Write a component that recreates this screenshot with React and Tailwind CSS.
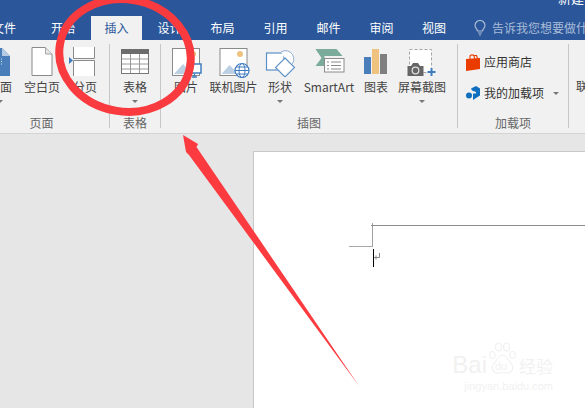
const cjk = { fontFamily: '"Noto Sans CJK SC", sans-serif' };

function Tab({ label, className }) {
  return <div className={`shrink-0 flex items-center justify-center text-white ${className}`}>{label}</div>;
}

function RibbonButton({ label, width, icon, caret }) {
  return (
    <div className={`flex flex-col items-center shrink-0 ${width}`}>
      <div className="h-[33px] flex items-end justify-center">{icon}</div>
      <div className="mt-[1px] h-[20px] leading-[20px] whitespace-nowrap">{label}</div>
      {caret && <div className="mt-[3px] w-0 h-0 border-x-[3px] border-x-transparent border-t-[3px] border-t-[#777]" />}
    </div>
  );
}

function Group({ width, label, children, last }) {
  return (
    <div className={`shrink-0 h-full flex ${width}`}>
      <div className="flex-1 min-w-0 flex flex-col">
        <div className="flex-1 flex pt-[3px]">{children}</div>
        <div className="h-[20px] text-center text-[#666] leading-[20px] whitespace-nowrap">{label}</div>
      </div>
      {!last && <div className="w-px mt-[4px] mb-[5px] bg-[#c6c6c6]" />}
    </div>
  );
}

const Doc = () => (
  <svg width="20" height="28" viewBox="0 0 20 28"><path d="M0 0h12l8 8v20H0z" fill="#4a7ebb"/><path d="M12 0l8 8h-8z" fill="#b5cbe4"/><path d="M3 11h9M3 13.500h9M3 16h9" stroke="#dbe6f2" strokeDasharray="1 1"/></svg>
);
const Blank = () => (
  <svg width="22" height="29" viewBox="0 0 22 29"><path d="M1 .5h13.500L21 7v21.500H1z" fill="#fff" stroke="#8a8a8a"/><path d="M14.500 .5V7H21" fill="#e6e6e6" stroke="#a5a5a5"/></svg>
);
const Break = () => (
  <svg width="32" height="29" viewBox="0 0 32 29"><path d="M4.500 0v11.500h21V0M4.500 29V13.500h21V29" fill="#fff" stroke="#8a8a8a"/><path d="M0 10l4 3.500L0 17z" fill="#3f7cbf"/></svg>
);
const TableIcon = () => (
  <svg width="28" height="25" viewBox="0 0 28 25" className="mb-[2px]">
    <rect x=".5" y=".5" width="27" height="24" fill="#fff" stroke="#777"/>
    <rect x="0" y="0" width="28" height="5" fill="#6d6d6d"/>
    <path d="M1 10h26M1 15h26M1 20h26M9.500 5v19M18.500 5v19" stroke="#9a9a9a"/>
  </svg>
);
const Picture = () => (
  <svg width="32" height="30" viewBox="0 0 32 30" className="-mb-[2px]">
    <rect x="2.500" y=".5" width="27" height="27" fill="#fff" stroke="#8a8a8a"/>
    <path d="M4 26l9-10 5 5 3-2 5 7z" fill="#bcd0e4"/>
    <circle cx="23" cy="6" r="3" fill="#efc27f"/>
    <rect x="17.500" y="16" width="13.500" height="9" fill="#fff" stroke="#3f7cbf" strokeWidth="1.500"/>
    <path d="M22 29h5M24.500 26v3" stroke="#3f7cbf" strokeWidth="1.300"/>
  </svg>
);
const Online = () => (
  <svg width="32" height="30" viewBox="0 0 32 30" className="-mb-[2px]">
    <rect x="2" y=".5" width="27" height="27" fill="#fff" stroke="#8a8a8a"/>
    <path d="M3.500 26l8-9 5 5 3-2 5 6z" fill="#bcd0e4"/>
    <circle cx="22" cy="6" r="3" fill="#efc27f"/>
    <circle cx="24" cy="22.500" r="7" fill="#fff" stroke="#3f7cbf" strokeWidth="1.200"/>
    <ellipse cx="24" cy="22.500" rx="3" ry="7" fill="none" stroke="#3f7cbf"/>
    <path d="M17 22.500h14M18 19h12M18 26h12" stroke="#3f7cbf"/>
  </svg>
);
const Shapes = () => (
  <svg width="32" height="30" viewBox="0 0 32 30" className="-mb-[1px]">
    <rect x="2.500" y="6" width="17.500" height="17" fill="#fff" stroke="#5b8fc7" strokeWidth="1.200"/>
    <path d="M17 5a8 8 0 1 1 9 14" fill="#fff" stroke="#8fb0d3"/>
    <path d="M21 11l9.500 9.500L21 30l-9.500-9.500z" fill="#fff" stroke="#5b8fc7" strokeWidth="1.100"/>
  </svg>
);
const SmartArt = () => (
  <svg width="32" height="24" viewBox="0 0 32 24" className="mb-[3px]">
    <path d="M2.500 0h21l6 7H11.500v10h-9l6-8z" fill="#7bab9a"/>
    <rect x="11.500" y="9.500" width="19.500" height="13.500" fill="#fff" stroke="#8a8a8a"/>
    <path d="M14 13h2M18 13h10M14 16.500h2M18 16.500h10M14 20h2M18 20h10" stroke="#8a8a8a"/>
  </svg>
);
const Chart = () => (
  <svg width="24" height="25" viewBox="0 0 24 25" className="mb-[2px]">
    <rect x="0" y="8" width="7" height="17" fill="#4a7ebb"/>
    <rect x="8" y="0" width="7" height="25" fill="#efc27f"/>
    <rect x="16" y="5" width="7" height="20" fill="#7f7f7f"/>
  </svg>
);
const Screenshot = () => (
  <svg width="30" height="28" viewBox="0 0 30 28">
    <rect x="2.500" y="1.500" width="22" height="23" fill="#fff" stroke="#a5a5a5" strokeDasharray="3 2"/>
    <path d="M.5 18h3.500l2-3h5l2 3h3.500v10H.5z" fill="#666"/>
    <circle cx="8.500" cy="22.500" r="3.300" fill="#666" stroke="#ddd" strokeWidth="1.300"/>
    <path d="M24.500 20v8M20.500 24h8" stroke="#3f7cbf" strokeWidth="2"/>
  </svg>
);
const Store = () => (
  <svg width="14" height="17" viewBox="0 0 14 17">
    <path d="M0 5l14-1v11l-14 2z" fill="#eb3c00"/>
    <path d="M4 6V2C4 .5 8 .5 8 2l1 4M8 1.500h2.500l1 3" fill="none" stroke="#eb3c00" strokeWidth="1.100"/>
  </svg>
);
const Addin = () => (
  <svg width="14" height="14" viewBox="0 0 14 14">
    <path d="M5 2.500L10 0l4 2.500v7L10 12V6L6 4.500z" fill="#106ebe"/>
    <circle cx="3" cy="9.500" r="3" fill="#106ebe"/>
    <path d="M7 7.500h3V12l-3 2z" fill="#106ebe"/>
  </svg>
);
const Paw = () => (
  <svg width="27" height="34" viewBox="0 0 27 34" fill="none" stroke="#f1f1f1" strokeWidth="1.200">
    <ellipse cx="3.500" cy="13" rx="2.700" ry="3.500" />
    <ellipse cx="9.500" cy="5" rx="3" ry="4" />
    <ellipse cx="17.500" cy="5" rx="3" ry="4" />
    <ellipse cx="23.500" cy="13" rx="2.700" ry="3.500" />
    <path d="M13.500 13c-4 0-5 5-9 9-3 4 0 10 5 9 3-.5 5-1 8 0 5 1 8-5 5-9-4-4-5-9-9-9z" />
  </svg>
);

export default function App() {
  return (
    <div className="relative w-[585px] h-[408px] overflow-hidden bg-[#e6e6e6] text-[12px] text-[#444]" style={cjk}>
      <div className="h-[40px] bg-[#2b579a] flex flex-col overflow-hidden">
        <div className="h-[16px] flex justify-end overflow-hidden">
          <span className="text-white text-[13px] leading-[16px] -mt-[10px] w-[27px] overflow-hidden whitespace-nowrap">新建</span>
        </div>
        <div className="h-[24px] flex items-stretch">
          <Tab label="文件" className="w-[42px] -ml-[17px] mr-[13px]" />
          <Tab label="开始" className="w-[50px] mr-[3px]" />
          <div className="shrink-0 w-[51px] bg-[#f1f1f1] flex items-center justify-center text-[#2b579a]">插入</div>
          <Tab label="设计" className="w-[53px] ml-[1px]" />
          <Tab label="布局" className="w-[53px]" />
          <Tab label="引用" className="w-[53px]" />
          <Tab label="邮件" className="w-[53px]" />
          <Tab label="审阅" className="w-[53px]" />
          <Tab label="视图" className="w-[52px]" />
          <div className="shrink-0 ml-[14px] flex items-center gap-[6px] text-[#a9bcd8] whitespace-nowrap">
            <svg width="12" height="16" viewBox="0 0 12 16" fill="none" stroke="#a9bcd8" strokeWidth="1.200">
              <path d="M3.500 11c0-2-2.500-3-2.500-5.500a5 5 0 0 1 10 0C11 8 8.500 9 8.500 11z"/>
              <path d="M4 13h4M5 15h2"/>
            </svg>
            <span>告诉我您想要做什么</span>
          </div>
        </div>
      </div>

      <div className="h-[94px] bg-[#f1f1f1] border-b border-[#d4d4d4] flex">
        <Group width="w-[136px] -ml-[26px]" label="页面">
          <div className="flex pl-[14px]">
            <RibbonButton label="封面" width="w-[24px]" icon={<Doc />} caret />
            <div className="ml-[12px]"><RibbonButton label="空白页" width="w-[36px]" icon={<Blank />} /></div>
            <div className="ml-[9px]"><RibbonButton label="分页" width="w-[32px]" icon={<Break />} /></div>
          </div>
        </Group>
        <Group width="w-[51px]" label="表格">
          <div className="w-full">
            <RibbonButton label="表格" width="w-full" icon={<TableIcon />} caret />
          </div>
        </Group>
        <Group width="w-[297px]" label="插图">
          <div className="flex pl-[12px] gap-[10px]">
            <RibbonButton label="图片" width="w-[26px]" icon={<Picture />} />
            <RibbonButton label="联机图片" width="w-[49px]" icon={<Online />} />
            <RibbonButton label="形状" width="w-[24px]" icon={<Shapes />} caret />
            <div className="ml-[2px]"><RibbonButton label="SmartArt" width="w-[50px]" icon={<SmartArt />} /></div>
            <RibbonButton label="图表" width="w-[24px]" icon={<Chart />} />
            <RibbonButton label="屏幕截图" width="w-[48px]" icon={<Screenshot />} caret />
          </div>
        </Group>
        <Group width="w-[111px]" label="加载项">
          <div className="flex flex-col pl-[8px] pt-[9px] gap-[11px] text-[#333]">
            <div className="flex items-center gap-[4px] h-[20px]"><Store /><span>应用商店</span></div>
            <div className="flex items-center gap-[4px] h-[20px]"><Addin /><span>我的加载项</span>
              <span className="ml-[5px] w-0 h-0 border-x-[3px] border-x-transparent border-t-[3px] border-t-[#777]" />
            </div>
          </div>
        </Group>
        <Group width="w-[16px]" label="" last>
          <div className="pl-[7px] pt-[34px] whitespace-nowrap">联机</div>
        </Group>
      </div>

      <div className="pl-[253px] pt-[17px]">
        <div className="relative w-[332px] h-[257px] bg-white border-l border-t border-[#c8c8c8]">
          <div className="absolute left-[118px] top-[71px] w-px h-[23px] bg-[#a0a0a0]" />
          <div className="absolute left-[117px] top-[73px] right-0 h-px bg-[#8c8c8c]" />
          <div className="absolute left-[95px] top-[94px] w-[24px] h-px bg-[#a8a8a8]" />
          <div className="absolute left-[119px] top-[97px] w-px h-[18px] bg-black" />
          <svg className="absolute left-[119px] top-[101px]" width="8" height="8" viewBox="0 0 8 8" fill="none" stroke="#888">
            <path d="M6.500 0v4.500H1M3 2.500v4" />
          </svg>
          <div className="absolute right-[32px] bottom-[16px] flex flex-col items-end text-[#f1f1f1] select-none">
            <div className="flex items-end h-[34px]">
              <span className="text-[24px] leading-[22px]" style={{ fontFamily: '"Liberation Sans", sans-serif' }}>Bai</span>
              <span className="relative ml-[2px]"><Paw /><span className="absolute left-[6px] bottom-[4px] text-[11px] leading-[12px]" style={{ fontFamily: '"Liberation Sans", sans-serif' }}>du</span></span>
              <span className="ml-[3px] text-[17px] leading-[20px]">经验</span>
            </div>
            <div className="mt-[5px] text-[11px] leading-[11px] whitespace-nowrap" style={{ fontFamily: '"Liberation Sans", sans-serif' }}>jingyan.baidu.com</div>
          </div>
        </div>
      </div>

      <svg className="absolute inset-0 pointer-events-none" width="585" height="408" viewBox="0 0 585 408">
        <ellipse cx="125" cy="55.500" rx="66" ry="56" fill="none" stroke="#f93a3f" strokeWidth="8" transform="rotate(10 125 55.500)"/>
        <path d="M183 135L198 144 196.500 147 359 386 189 155 186 152z" fill="#fb3b3f"/>
      </svg>
    </div>
  );
}
